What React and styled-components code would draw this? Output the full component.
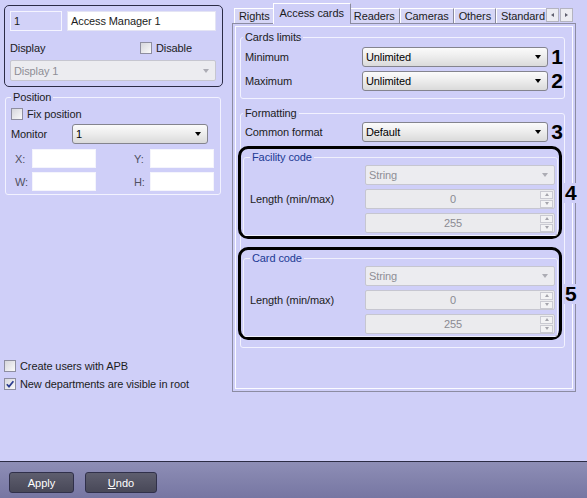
import React from "react";
import styled, { createGlobalStyle } from "styled-components";

const TABS = ["Rights", "Access cards", "Readers", "Cameras", "Others", "Standard"];

const CheckBox = ({ checked, children }) => (
  <CheckLabel>
    <CheckMark>
      {checked && (
        <svg width="10" height="10" viewBox="0 0 10 10">
          <path d="M1.8 5.2 L4 7.6 L8.4 2.2" fill="none" stroke="#2b3c8f" strokeWidth="1.7" />
        </svg>
      )}
    </CheckMark>
    {children}
  </CheckLabel>
);

const ComboBox = ({ value, disabled, width }) => (
  <Combo $disabled={disabled} $width={width}>
    <ComboText>{value}</ComboText>
    <ComboArrow $disabled={disabled} />
  </Combo>
);

const SpinBox = ({ value }) => (
  <Spin>
    <SpinValue>{value}</SpinValue>
    <SpinButtons>
      <SpinButton>
        <SpinArrow $up />
      </SpinButton>
      <SpinButton>
        <SpinArrow />
      </SpinButton>
    </SpinButtons>
  </Spin>
);

const CodeGroup = ({ title, marker }) => (
  <HighlightRow>
    <Highlight>
      <InnerGroup>
        <Legend $accent $indent={0}>{title}</Legend>
        <CodeGrid>
          <ComboBox value="String" disabled />
          <CodeLabel>Length (min/max)</CodeLabel>
          <SpinBox value="0" />
          <SpinBox value="255" />
        </CodeGrid>
      </InnerGroup>
    </Highlight>
    <Marker>{marker}</Marker>
  </HighlightRow>
);

const App = () => {
  const [activeTab] = React.useState("Access cards");

  return (
    <Screen>
      <GlobalStyle />
      <Main>
        <LeftColumn>
          <IdentityBox>
            <FieldRow>
              <IdField>1</IdField>
              <NameField>Access Manager 1</NameField>
            </FieldRow>
            <DisplayRow>
              <DisplayLabel>Display</DisplayLabel>
              <CheckBox>Disable</CheckBox>
            </DisplayRow>
            <DisplaySelect>
              <ComboBox value="Display 1" disabled />
            </DisplaySelect>
          </IdentityBox>

          <PositionGroup>
            <Legend $indent={5}>Position</Legend>
            <FixRow>
              <CheckBox>Fix position</CheckBox>
            </FixRow>
            <MonitorRow>
              <MonitorLabel>Monitor</MonitorLabel>
              <ComboBox value="1" width={136} />
            </MonitorRow>
            <CoordGrid>
              <CoordLabel>X:</CoordLabel>
              <CoordField />
              <span />
              <CoordLabel>Y:</CoordLabel>
              <CoordField />
              <CoordLabel>W:</CoordLabel>
              <CoordField />
              <span />
              <CoordLabel>H:</CoordLabel>
              <CoordField />
            </CoordGrid>
          </PositionGroup>

          <CheckList>
            <CheckBox>Create users with APB</CheckBox>
            <CheckBox checked>New departments are visible in root</CheckBox>
          </CheckList>
        </LeftColumn>

        <TabControl>
          <TabStrip>
            <TabList>
              {TABS.map((tab) => (
                <Tab key={tab} $active={tab === activeTab}>
                  {tab}
                </Tab>
              ))}
            </TabList>
            <ScrollButtons>
              <ScrollButton>
                <ScrollArrow $left />
              </ScrollButton>
              <ScrollButton>
                <ScrollArrow />
              </ScrollButton>
            </ScrollButtons>
          </TabStrip>

          <TabPanel>
            <Group>
              <Legend $indent={2}>Cards limits</Legend>
              <LimitRows>
                <SettingRow>
                  <SettingLabel>Minimum</SettingLabel>
                  <ComboBox value="Unlimited" width={191} />
                  <Marker>1</Marker>
                </SettingRow>
                <SettingRow>
                  <SettingLabel>Maximum</SettingLabel>
                  <ComboBox value="Unlimited" width={191} />
                  <Marker>2</Marker>
                </SettingRow>
              </LimitRows>
            </Group>

            <FormattingGroup>
              <Legend $indent={2}>Formatting</Legend>
              <FormatRow>
                <SettingLabel>Common format</SettingLabel>
                <ComboBox value="Default" width={191} />
                <Marker>3</Marker>
              </FormatRow>
              <CodeGroup title="Facility code" marker="4" />
              <CodeGroup title="Card code" marker="5" />
            </FormattingGroup>
          </TabPanel>
        </TabControl>
      </Main>

      <Footer>
        <FooterButton>Apply</FooterButton>
        <FooterButton $wide>
          <u>U</u>ndo
        </FooterButton>
      </Footer>
    </Screen>
  );
};

const GlobalStyle = createGlobalStyle`
  html, body {
    margin: 0;
    padding: 0;
  }

  body {
    background: #cfcff8;
    font-family: "Liberation Sans", Arial, sans-serif;
    font-size: 11px;
    letter-spacing: -0.1px;
    color: #1c1c1c;
  }

  * {
    box-sizing: border-box;
  }
`;

const Screen = styled.div`
  width: 587px;
  height: 498px;
  display: flex;
  flex-direction: column;
  background: #cfcff8;
  overflow: hidden;
`;

const Main = styled.div`
  display: flex;
  height: 461px;
`;

const LeftColumn = styled.div`
  width: 228px;
  display: flex;
  flex-direction: column;
  padding-left: 4px;
`;

const IdentityBox = styled.div`
  width: 219px;
  height: 82px;
  margin-top: 5px;
  padding: 5px 6px 5px 5px;
  border: 1px solid #2c2c46;
  border-radius: 5px;
  display: flex;
  flex-direction: column;
`;

const FieldRow = styled.div`
  display: flex;
  gap: 5px;
  height: 20px;
`;

const IdField = styled.div`
  width: 52px;
  border: 1px solid #f4f4ff;
  background: #d2d2f8;
  padding: 3px 3px 0;
`;

const NameField = styled.div`
  width: 149px;
  border: 1px solid #e4e4f4;
  background: #fff;
  padding: 3px 3px 0;
`;

const DisplayRow = styled.div`
  display: flex;
  align-items: center;
  height: 13px;
  margin-top: 10px;
`;

const DisplayLabel = styled.span`
  width: 130px;
`;

const DisplaySelect = styled.div`
  margin-top: 6px;
  height: 21px;
  display: flex;
`;

const Legend = styled.legend`
  padding: 0 2px;
  margin-left: ${(p) => p.$indent}px;
  line-height: 13px;
  color: ${(p) => (p.$accent ? "#1c3a94" : "#1c1c1c")};
`;

const Group = styled.fieldset`
  margin: 0;
  padding: 0 0 7px;
  min-inline-size: 0;
  border: 1px solid #f2f2ff;
  border-radius: 3px;
`;

const PositionGroup = styled(Group)`
  width: 216px;
  margin: 4px 0 0 1px;
  padding: 0 0 3px;
`;

const FixRow = styled.div`
  margin-top: 4px;
  padding-left: 5px;
  height: 12px;
  display: flex;
  align-items: center;
`;

const MonitorRow = styled.div`
  margin-top: 4px;
  padding-left: 5px;
  height: 20px;
  display: flex;
  align-items: center;
`;

const MonitorLabel = styled.span`
  width: 61px;
`;

const CoordGrid = styled.div`
  margin-top: 5px;
  padding-left: 9px;
  display: grid;
  grid-template-columns: 17px 64px 38px 16px 64px;
  grid-auto-rows: 19px;
  row-gap: 4px;
  align-items: center;
`;

const CoordLabel = styled.span`
  color: #505062;
`;

const CoordField = styled.div`
  height: 19px;
  background: #fff;
  border: 1px solid #f4f4fc;
`;

const CheckList = styled.div`
  margin-top: auto;
  margin-bottom: 71px;
  display: flex;
  flex-direction: column;
  gap: 5px;
`;

const CheckLabel = styled.label`
  display: flex;
  align-items: center;
  gap: 4px;
  height: 13px;
  white-space: nowrap;
`;

const CheckMark = styled.span`
  width: 12px;
  height: 12px;
  border: 1px solid #8e8ea0;
  background: linear-gradient(135deg, #d6d6dc, #fafafa);
  display: flex;
  align-items: center;
  justify-content: center;
`;

const Combo = styled.div`
  width: ${(p) => (p.$width ? `${p.$width}px` : "100%")};
  height: 100%;
  min-height: 20px;
  display: flex;
  align-items: center;
  justify-content: space-between;
  padding-left: 3px;
  border: 1px solid ${(p) => (p.$disabled ? "#c6c6d0" : "#84848e")};
  border-radius: ${(p) => (p.$disabled ? 2 : 3)}px;
  color: ${(p) => (p.$disabled ? "#8e8e96" : "#000")};
  background: ${(p) =>
    p.$disabled
      ? "#ececf0"
      : "linear-gradient(#fbfbfb, #ececec 50%, #dadada)"};
`;

const ComboText = styled.span`
  white-space: nowrap;
`;

const ComboArrow = styled.span`
  width: 0;
  height: 0;
  margin-right: 6px;
  border-left: 3.5px solid transparent;
  border-right: 3.5px solid transparent;
  border-top: 4px solid ${(p) => (p.$disabled ? "#acacb4" : "#000")};
`;

const Spin = styled.div`
  height: 20px;
  display: flex;
  align-items: center;
  border: 1px solid #c6c6d0;
  border-radius: 2px;
  background: #ebebee;
  color: #8a8a92;
  padding-right: 1px;
`;

const SpinValue = styled.span`
  flex: 1;
  text-align: center;
`;

const SpinButtons = styled.div`
  width: 13px;
  display: flex;
  flex-direction: column;
  gap: 1px;
`;

const SpinButton = styled.div`
  height: 8px;
  border: 1px solid #cacad2;
  background: #f3f3f5;
  display: flex;
  align-items: center;
  justify-content: center;
`;

const SpinArrow = styled.span`
  width: 0;
  height: 0;
  border-left: 2.5px solid transparent;
  border-right: 2.5px solid transparent;
  ${(p) =>
    p.$up ? "border-bottom: 3px solid #a4a4ac;" : "border-top: 3px solid #a4a4ac;"}
`;

const TabControl = styled.div`
  width: 344px;
  margin-left: 4px;
  display: flex;
  flex-direction: column;
`;

const TabStrip = styled.div`
  height: 24px;
  display: flex;
  align-items: flex-end;
  padding-left: 2px;
`;

const TabList = styled.div`
  flex: 1;
  height: 24px;
  display: flex;
  align-items: flex-end;
  overflow: hidden;
  padding-left: 2px;
  margin-left: -2px;
`;

const Tab = styled.div`
  flex-shrink: 0;
  position: relative;
  display: flex;
  align-items: center;
  padding: ${(p) => (p.$active ? "0 6px 3px" : "0 4px")};
  height: ${(p) => (p.$active ? 21 : 15)}px;
  margin: ${(p) => (p.$active ? "0 -2px 0" : "0 0 1px")};
  z-index: ${(p) => (p.$active ? 2 : 1)};
  background: ${(p) => (p.$active ? "#cfcff8" : "#d6d6f6")};
  border-top: 1px solid #fff;
  border-left: 1px solid #fff;
  border-right: 1px solid #8a8a9e;
  white-space: nowrap;
`;

const ScrollButtons = styled.div`
  display: flex;
  gap: 1px;
  margin: 0 3px 2px 0;
`;

const ScrollButton = styled.div`
  width: 13px;
  height: 14px;
  border: 1px solid #b4b4c0;
  background: #ececf2;
  display: flex;
  align-items: center;
  justify-content: center;
`;

const ScrollArrow = styled.span`
  width: 0;
  height: 0;
  border-top: 2.5px solid transparent;
  border-bottom: 2.5px solid transparent;
  ${(p) =>
    p.$left ? "border-right: 3px solid #606070;" : "border-left: 3px solid #606070;"}
`;

const TabPanel = styled.div`
  height: 369px;
  margin-top: -1px;
  padding: 7px 10px 0 7px;
  border: 1px solid #8c8ca2;
  box-shadow: inset 0 0 0 2px #cfcff8, inset 0 0 0 3px #fbfbff;
`;

const LimitRows = styled.div`
  margin-top: 3px;
  display: flex;
  flex-direction: column;
  gap: 4px;
`;

const SettingRow = styled.div`
  height: 20px;
  padding-left: 4px;
  display: flex;
  align-items: center;
`;

const FormatRow = styled(SettingRow)`
  margin-top: 2px;
`;

const SettingLabel = styled.span`
  width: 120px;
`;

const Marker = styled.span`
  margin-left: 2px;
  padding: 0 1px;
  background: #cfcff8;
  font-size: 21px;
  font-weight: bold;
  line-height: 20px;
  letter-spacing: 0;
  color: #000;
`;

const FormattingGroup = styled(Group)`
  margin-top: 8px;
`;

const HighlightRow = styled.div`
  display: flex;
  align-items: center;
  margin: 4px 0 0 -3px;

  & + & {
    margin-top: 8px;
  }
`;

const Highlight = styled.div`
  width: 324px;
  height: 93px;
  padding: 2px 1px 0 2px;
  border: 3px solid #000;
  border-radius: 10px;
`;

const InnerGroup = styled(Group)`
  padding: 0 2px 2px 6px;
  border-color: #f0f0fc;
`;

const CodeGrid = styled.div`
  margin-top: 1px;
  display: grid;
  grid-template-columns: 115px 190px;
  grid-auto-rows: 20px;
  row-gap: 4px;

  & > * {
    grid-column: 2;
  }
`;

const CodeLabel = styled.span`
  grid-column: 1 !important;
  grid-row: 2;
  align-self: center;
`;

const Footer = styled.div`
  flex: 1;
  display: flex;
  gap: 11px;
  padding: 10px 0 0 9px;
  border-top: 1px solid #2c2c44;
  background: linear-gradient(#8e8eb6, #7676a2);
`;

const FooterButton = styled.button`
  width: ${(p) => (p.$wide ? 72 : 65)}px;
  height: 21px;
  padding: 0;
  border: 1px solid #30304a;
  border-radius: 3px;
  background: linear-gradient(#5e5e6e, #484858);
  color: #fff;
  font-family: "Liberation Sans", Arial, sans-serif;
  font-size: 11px;
`;

export default App;
